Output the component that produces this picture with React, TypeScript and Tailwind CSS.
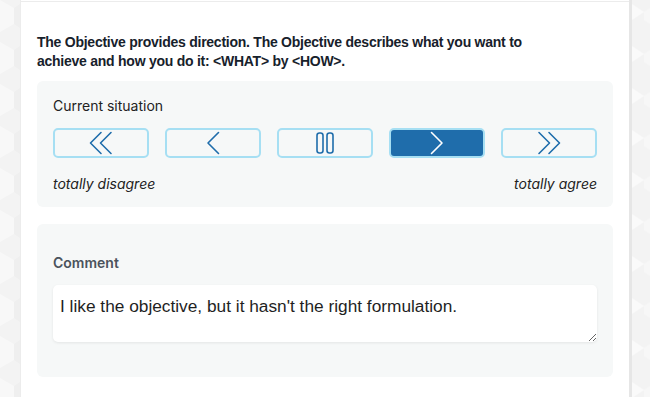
import React from "react";

const BLUE = "#1f6dab";

function Hex({ side, w }: { side: "left" | "right"; w: number }) {
  const rows = Array.from({ length: 10 });
  return (
    <svg width={w} height="397" viewBox={`0 0 ${w} 397`} className="block shrink-0">
      <rect width={w} height="397" fill="#f3f3f3" />
      {rows.map((_, i) => {
        const y = i * 42 - 10;
        return side === "left" ? (
          <g key={i}>
            <polygon points={`0,${y + 10} 14,${y + 18} 14,${y + 34} 0,${y + 42}`} fill="#f8f8f8" />
            <polygon points={`14,${y + 18} ${w},${y + 14} ${w},${y + 38} 14,${y + 34}`} fill="#efefef" />
          </g>
        ) : (
          <g key={i}>
            <polygon points={`0,${y + 14} 12,${y + 22} 0,${y + 30}`} fill="#fafafa" />
            <polygon points={`12,${y + 22} ${w},${y + 18} ${w},${y + 34} 12,${y + 30}`} fill="#f7f7f7" />
          </g>
        );
      })}
    </svg>
  );
}

function Chev({ dir, double, color }: { dir: "l" | "r"; double?: boolean; color: string }) {
  if (double) {
    return (
      <svg width="24" height="24" viewBox="0 0 24 24" fill="none" stroke={color} strokeWidth="1.6" strokeLinecap="round" strokeLinejoin="round">
        {dir === "l" ? (
          <>
            <polyline points="12,1.5 1.5,12 12,22.5" />
            <polyline points="22,1.5 11.5,12 22,22.5" />
          </>
        ) : (
          <>
            <polyline points="2,1.5 12.5,12 2,22.5" />
            <polyline points="12,1.5 22.5,12 12,22.5" />
          </>
        )}
      </svg>
    );
  }
  return (
    <svg width="14" height="24" viewBox="0 0 14 24" fill="none" stroke={color} strokeWidth="1.6" strokeLinecap="round" strokeLinejoin="round">
      {dir === "l" ? <polyline points="12.5,1.5 2,12 12.5,22.5" /> : <polyline points="1.5,1.5 12,12 1.5,22.5" />}
    </svg>
  );
}

function Pause({ color }: { color: string }) {
  return (
    <svg width="18" height="22" viewBox="0 0 18 22" fill="none" stroke={color} strokeWidth="1.6">
      <rect x="1" y="1" width="6" height="20" rx="2.5" />
      <rect x="11" y="1" width="6" height="20" rx="2.5" />
    </svg>
  );
}

export default function App() {
  const btn = "h-[30px] rounded-[5px] border-2 border-[#a6dff3] flex items-center justify-center";
  return (
    <div className="w-[650px] h-[397px] overflow-hidden flex bg-[#f3f3f3]" style={{ fontFamily: "Inter, 'Liberation Sans', sans-serif" }}>
      <Hex side="left" w={20} />
      <div className="flex-1 bg-white border-l border-[#ececec] border-r-[3px] border-r-[#e6e6e6] flex flex-col">
        <div className="h-[2px] border-b border-[#ececec]" />
        <div className="px-4 pt-[31px]">
          <p className="max-w-[530px] text-[14px] leading-[19px] font-bold text-[#17212b] tracking-[-0.25px]" style={{ fontFamily: "'Liberation Sans', Arial, sans-serif" }}>
            The Objective provides direction. The Objective describes what you want to achieve and how you do it: &lt;WHAT&gt; by &lt;HOW&gt;.
          </p>
          <div className="mt-[10px] rounded-[6px] bg-[#f6f8f8] px-4 pt-[15px] pb-[13px]">
            <div className="text-[14px] leading-[20px] text-[#222]">Current situation</div>
            <div className="mt-[12px] grid grid-cols-5 gap-4">
              <button className={btn}><Chev dir="l" double color={BLUE} /></button>
              <button className={btn}><Chev dir="l" color={BLUE} /></button>
              <button className={btn}><Pause color={BLUE} /></button>
              <button className={`${btn} bg-[#1f6dab]`}><Chev dir="r" color="#ffffff" /></button>
              <button className={btn}><Chev dir="r" double color={BLUE} /></button>
            </div>
            <div className="mt-[16px] flex justify-between text-[14px] leading-[20px] italic text-[#222]">
              <span>totally disagree</span>
              <span>totally agree</span>
            </div>
          </div>
          <div className="mt-[17px] rounded-[6px] bg-[#f6f8f8] px-4 pt-[29px] pb-[35px]">
            <div className="text-[14px] leading-[20px] font-semibold text-[#4b535c]">Comment</div>
            <textarea
              className="mt-[12px] block w-full h-[57px] rounded-[5px] bg-white shadow-[0_1px_3px_rgba(0,0,0,0.08)] pl-[7px] pt-[9px] text-[17.3px] leading-[24px] text-[#1f1f1f] outline-none resize-y"
              style={{ fontFamily: "'Liberation Sans', Arial, sans-serif" }}
              defaultValue="I like the objective, but it hasn't the right formulation."
            />
          </div>
        </div>
      </div>
      <Hex side="right" w={18} />
    </div>
  );
}
